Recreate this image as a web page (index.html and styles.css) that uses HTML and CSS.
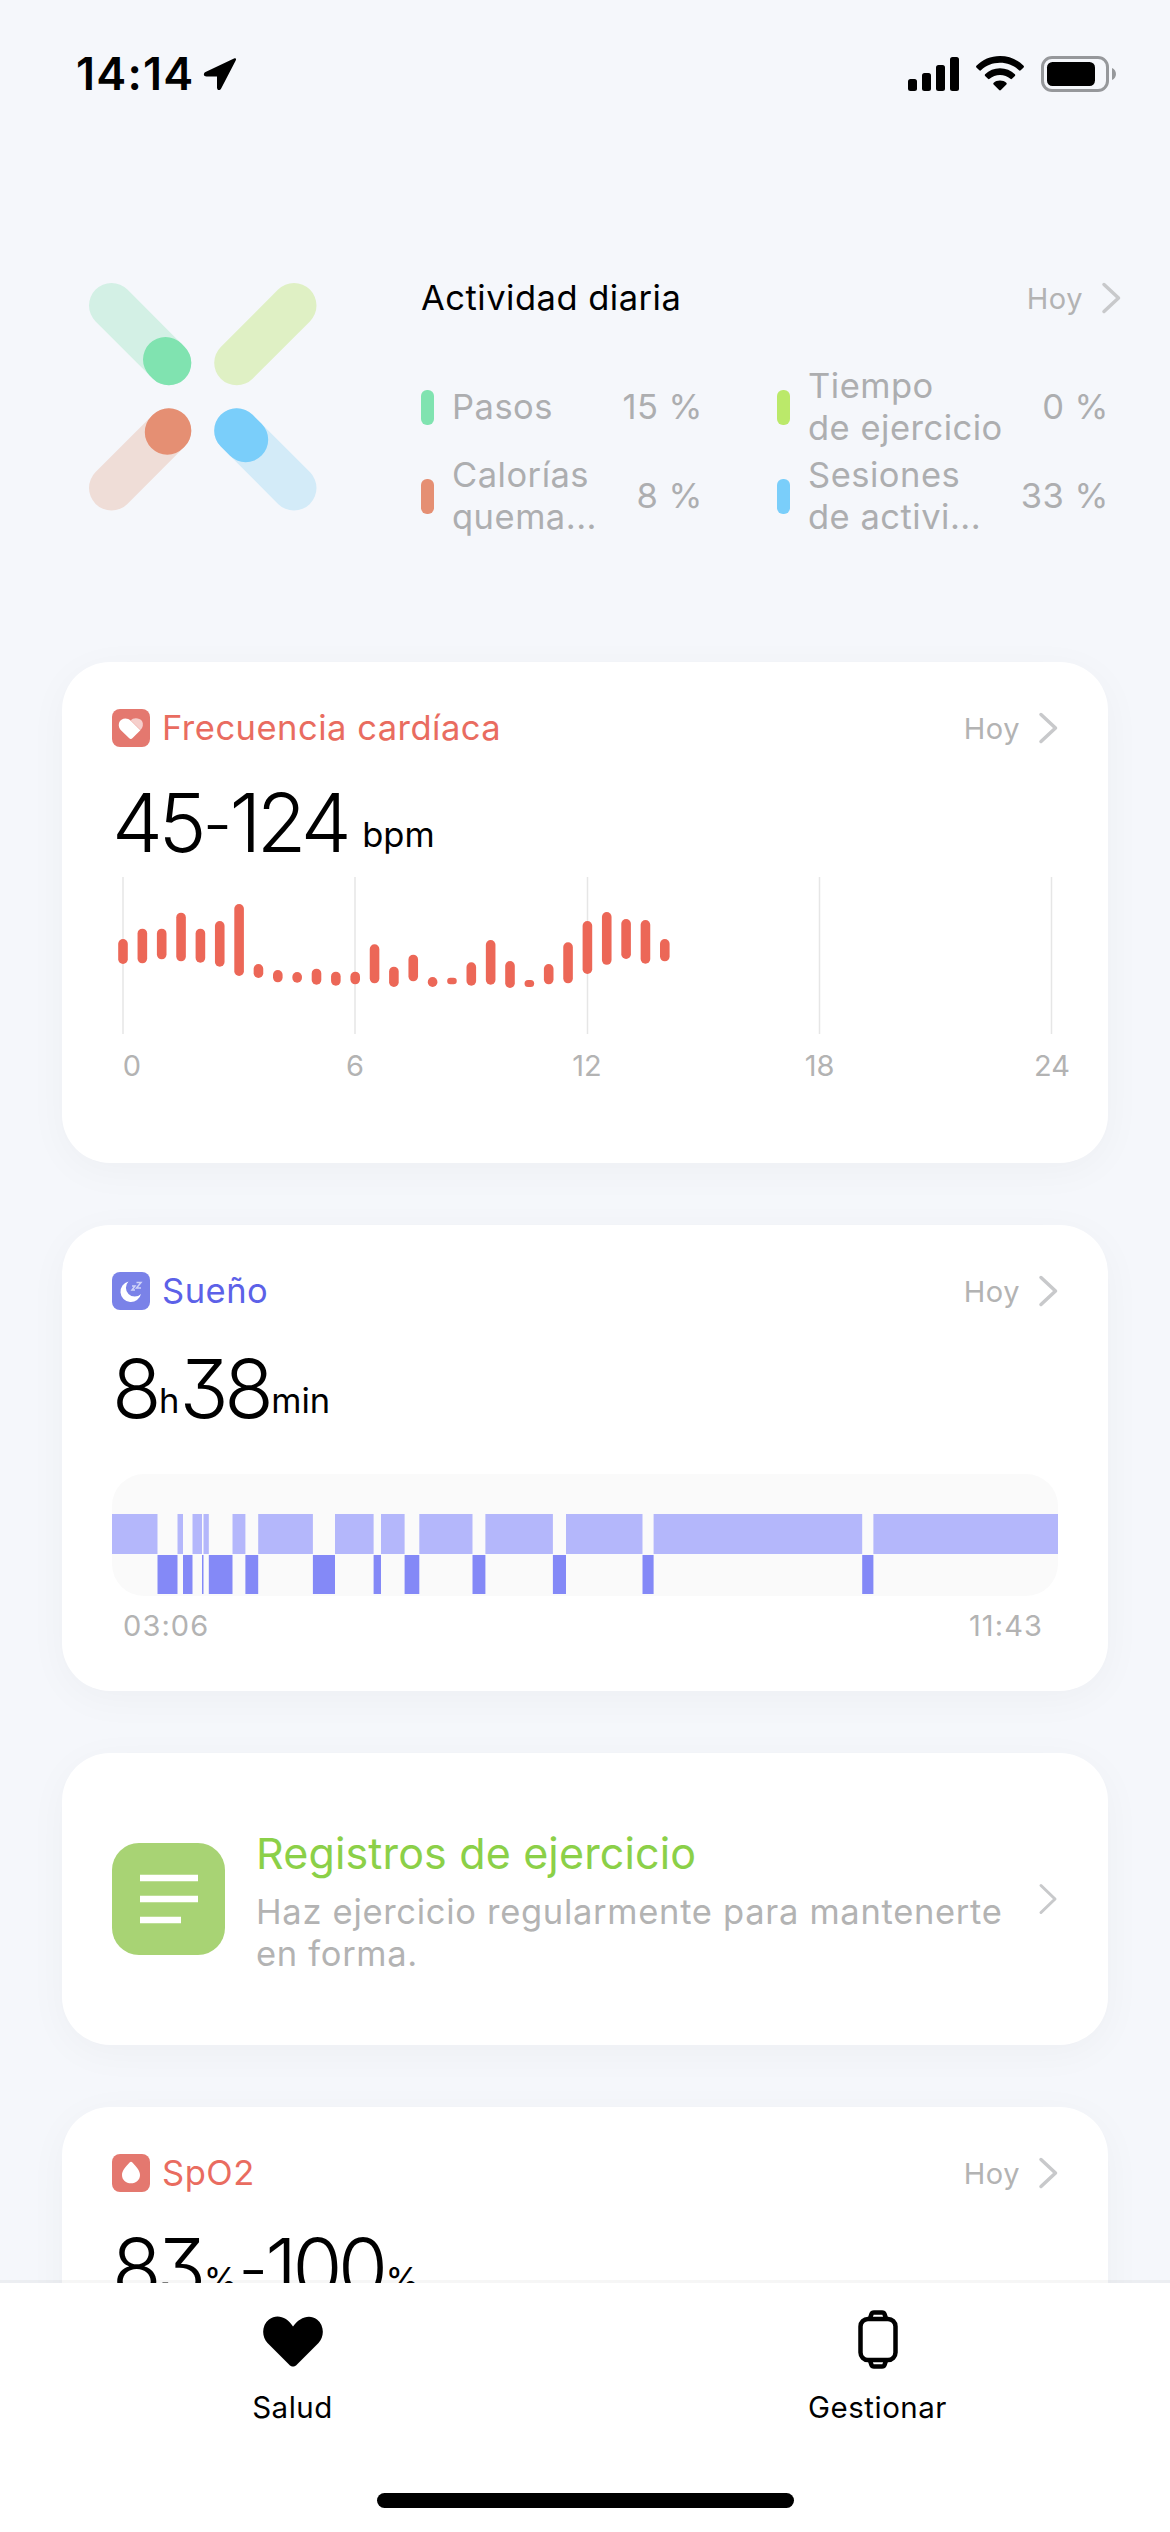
FILE: index.html
```html
<!DOCTYPE html>
<html lang="es">
<head>
    <meta charset="UTF-8">
    <meta name="viewport" content="width=device-width, initial-scale=1.0">
    <title>Salud</title>
    <link rel="stylesheet" href="styles.css">
</head>
<body>
    <div class="status-bar">
        <span class="time">14:14</span>
        <svg class="location" width="34" height="34" viewBox="0 0 34 34"><path d="M31 1.500 L2.500 15 C0 16.500 .5 19.500 3.500 19.500 H14 V30.500 C14 33.500 17 34 18.300 31.200 L32.700 3.500 C33.700 1.500 32.500 .8 31 1.500 Z"/></svg>
        <div class="status-icons">
            <svg width="52" height="34" viewBox="0 0 52 34">
                <rect x="1" y="22" width="9" height="12" rx="2.500"/>
                <rect x="15" y="16" width="9" height="18" rx="2.500"/>
                <rect x="29" y="8" width="9" height="26" rx="2.500"/>
                <rect x="43" y="0" width="9" height="34" rx="2.500"/>
            </svg>
            <svg width="48" height="36" viewBox="0 0 48 36">
                <path d="M24 0 C33.300 0 41.600 3.700 47.600 9.800 C48.100 10.300 48.100 10.900 47.600 11.400 L44.700 14.300 C44.200 14.800 43.500 14.800 43 14.300 C38 9.500 31.400 6.800 24 6.800 C16.600 6.800 10 9.500 5 14.300 C4.500 14.800 3.800 14.800 3.300 14.300 L.4 11.400 C-.1 10.900 -.1 10.300 .4 9.800 C6.400 3.700 14.700 0 24 0 Z"/>
                <path d="M24 12.300 C29.800 12.300 35 14.500 38.900 18.200 C39.400 18.700 39.400 19.400 38.900 19.900 L36 22.800 C35.500 23.300 34.900 23.300 34.400 22.800 C31.600 20.300 28 18.900 24 18.900 C20 18.900 16.400 20.300 13.600 22.800 C13.100 23.300 12.500 23.300 12 22.800 L9.100 19.900 C8.600 19.400 8.600 18.700 9.100 18.200 C13 14.500 18.200 12.300 24 12.300 Z"/>
                <path d="M24 24.500 C26.500 24.500 28.700 25.300 30.300 26.700 C30.900 27.200 30.900 27.900 30.400 28.400 L24.900 34 C24.300 34.600 23.700 34.600 23.100 34 L17.600 28.400 C17.100 27.900 17.100 27.200 17.700 26.700 C19.300 25.300 21.500 24.500 24 24.500 Z"/>
            </svg>
            <svg width="76" height="36" viewBox="0 0 76 36">
                <rect x="1.500" y="1.500" width="65" height="33" rx="9.500" fill="none" stroke="#96989b" stroke-width="3"/>
                <rect x="6" y="6" width="48" height="24" rx="5.500"/>
                <path d="M71 12 C76.300 14 76.300 22 71 24 Z" fill="#96989b"/>
            </svg>
        </div>
    </div>

    <main class="content">
        <section class="activity">
            <svg class="activity-figure" width="228" height="228" viewBox="0 0 228 228">
                <path stroke="#d3f0e5" d="M22.500 22.500 L79.800 79.800"/>
                <path stroke="#dff0c4" d="M205 22.500 L147.700 79.800"/>
                <path stroke="#efddd7" d="M22.500 205 L79.800 147.700"/>
                <path stroke="#d3ebf8" d="M205 205 L147.700 147.700"/>
                <path stroke="#80e3b0" d="M76.500 76.500 L79.800 79.800"/>
                <path stroke="#e58f73" d="M78.300 149.200 L79.800 147.700"/>
                <path stroke="#7acefa" d="M156.700 156.700 L147.700 147.700"/>
            </svg>
            <div class="activity-info">
                <div class="activity-head">
                    <h2>Actividad diaria</h2>
                    <span class="today">Hoy</span>
                    <svg class="chevron" width="20" height="32" viewBox="0 0 20 32"><path d="M3 2.500 L17.500 16 L3 29.500"/></svg>
                </div>
                <div class="activity-grid">
                    <div class="stat">
                        <i class="pill green"></i>
                        <span class="label">Pasos</span>
                        <span class="value">15 %</span>
                    </div>
                    <div class="stat">
                        <i class="pill lime"></i>
                        <span class="label">Tiempo<br>de ejercicio</span>
                        <span class="value">0 %</span>
                    </div>
                    <div class="stat">
                        <i class="pill orange"></i>
                        <span class="label">Calorías<br>quema...</span>
                        <span class="value">8 %</span>
                    </div>
                    <div class="stat">
                        <i class="pill blue"></i>
                        <span class="label">Sesiones<br>de activi...</span>
                        <span class="value">33 %</span>
                    </div>
                </div>
            </div>
        </section>

        <section class="card heart">
            <div class="card-head">
                <svg class="card-icon" width="38" height="38" viewBox="0 0 38 38">
                    <rect width="38" height="38" rx="8" fill="#e4786f"/>
                    <path d="M18.800 11.500 C21 8.300 27.500 8.700 30 12 C31.700 15 31 18.500 28.500 21 Z" fill="#f6cfcc"/>
                    <path d="M18.800 11.800 C15 8 8.500 9.300 7 14 C6.200 17 7.300 19.500 9.200 21.500 L17 29 C18.200 30.200 19.400 30.200 20.600 29 L28.400 21.200 Z" fill="#fff"/>
                </svg>
                <h2>Frecuencia cardíaca</h2>
                <span class="today">Hoy</span>
                <svg class="chevron" width="20" height="32" viewBox="0 0 20 32"><path d="M3 2.500 L17.500 16 L3 29.500"/></svg>
            </div>
            <div class="big">45<span class="dash">-</span>124<small class="bpm">bpm</small></div>
            <svg class="heart-chart" width="946" height="206" viewBox="112 877 946 206">
                <path class="grid" d="M123 877 V1034 M355 877 V1034 M587.500 877 V1034 M819.500 877 V1034 M1051.500 877 V1034"/>
                <g class="bars" id="bars"></g>
                <g class="axis">
                    <text x="132" y="1076">0</text>
                    <text x="355" y="1076">6</text>
                    <text x="587" y="1076">12</text>
                    <text x="819.500" y="1076">18</text>
                    <text x="1052" y="1076">24</text>
                </g>
            </svg>
        </section>

        <section class="card sleep">
            <div class="card-head">
                <svg class="card-icon" width="38" height="38" viewBox="0 0 38 38">
                    <rect width="38" height="38" rx="8" fill="#7a82e8"/>
                    <path d="M16.500 9.500 A10.400 10.400 0 1 0 29 22 A7.800 7.800 0 0 1 16.500 9.500 Z" fill="#fff"/>
                    <path d="M20 14 H23 L20 18 H23 M24.500 10.500 H29 L24.500 16 H29" fill="none" stroke="#d0d3f8" stroke-width="1.500"/>
                </svg>
                <h2>Sueño</h2>
                <span class="today">Hoy</span>
                <svg class="chevron" width="20" height="32" viewBox="0 0 20 32"><path d="M3 2.500 L17.500 16 L3 29.500"/></svg>
            </div>
            <div class="big">8<small>h</small>38<small>min</small></div>
            <svg class="sleep-chart" width="946" height="122" viewBox="112 0 946 122" id="sleep">
                <rect x="112" y="0" width="946" height="122" rx="32" fill="#fafafa"/>
            </svg>
            <div class="sleep-times">
                <span>03:06</span>
                <span>11:43</span>
            </div>
        </section>

        <section class="card records">
            <svg class="records-icon" width="113" height="112" viewBox="0 0 113 112">
                <rect width="113" height="112" rx="27" fill="#a8d374"/>
                <path d="M28 35 H86 M28 56 H86 M28 77 H69" stroke="#fff" stroke-width="6.500"/>
            </svg>
            <div class="records-text">
                <h2>Registros de ejercicio</h2>
                <p>Haz ejercicio regularmente para mantenerte<br>en forma.</p>
            </div>
            <svg class="chevron" width="20" height="32" viewBox="0 0 20 32"><path d="M3 2.500 L17 16 L3 29.500"/></svg>
        </section>

        <section class="card spo2">
            <div class="card-head">
                <svg class="card-icon" width="38" height="38" viewBox="0 0 38 38">
                    <rect width="38" height="38" rx="8" fill="#e4786f"/>
                    <path d="M17.600 8.500 C18.500 7.500 19.500 7.500 20.400 8.500 C24 12.300 28 16.500 28 21 C28 26 24 29.300 19 29.300 C14 29.300 10 26 10 21 C10 16.500 14 12.300 17.600 8.500 Z" fill="#fff"/>
                </svg>
                <h2>SpO2</h2>
                <span class="today">Hoy</span>
                <svg class="chevron" width="20" height="32" viewBox="0 0 20 32"><path d="M3 2.500 L17.500 16 L3 29.500"/></svg>
            </div>
            <div class="big">83<small>%</small><span class="dash">-</span>100<small>%</small></div>
        </section>
    </main>

    <nav class="tab-bar">
        <div class="tabs">
            <a class="tab">
                <svg width="60" height="60" viewBox="0 0 60 60"><path d="M30 16.500 C24 7 14 3.500 6 9.500 C-1.500 15.500 -1.500 26.500 4.500 33 L26 54.500 C28.500 57.300 31.500 57.300 34 54.500 L55.500 33 C61.500 26.500 61.500 15.500 54 9.500 C46 3.500 36 8 30 16.500 Z"/></svg>
                <span>Salud</span>
            </a>
            <a class="tab">
                <svg width="60" height="60" viewBox="0 0 60 60" fill="none" stroke="#000" stroke-width="4.500">
                    <rect x="12.500" y="9" width="35" height="41" rx="7.500"/>
                    <path d="M22 8.500 L23.500 4 Q24 2.500 26 2.500 H34 Q36 2.500 36.500 4 L38 8.500 M22 50.500 L23.500 55 Q24 56.500 26 56.500 H34 Q36 56.500 36.500 55 L38 50.500"/>
                </svg>
                <span>Gestionar</span>
            </a>
        </div>
        <div class="home-indicator"></div>
    </nav>

    <script src="charts.js"></script>
</body>
</html>
```

FILE: styles.css
```css
* {
    box-sizing: border-box;
}
body {
    margin: 0;
    width: 1170px;
    height: 2532px;
    display: flex;
    flex-direction: column;
    overflow: hidden;
    background-color: #f5f7fb;
    color: #000;
    font-family: Inter, "Liberation Sans", sans-serif;
}
h2, p {
    margin: 0;
    font-weight: 400;
}
svg {
    display: block;
    flex: none;
}

/* Barra de estado */
.status-bar {
    height: 148px;
    padding: 0 53px 0 76px;
    display: flex;
    align-items: center;
}
.time {
    font-size: 45px;
    font-weight: 600;
    line-height: 50px;
    letter-spacing: 1.2px;
}
.location {
    margin-left: 9px;
}
.status-icons {
    margin-left: auto;
    display: flex;
    align-items: center;
    gap: 17px;
}

.content {
    flex: 1;
    min-height: 0;
    overflow: hidden;
}

/* Actividad diaria */
.activity {
    height: 514px;
    padding: 135px 49px 0 89px;
    display: flex;
}
.activity-figure {
    fill: none;
    stroke-width: 45;
    stroke-linecap: round;
}
.activity-info {
    flex: 1;
    margin-left: 104px;
}
.activity-head,
.card-head {
    height: 38px;
    display: flex;
    align-items: center;
}
.activity-head {
    margin-top: -4px;
}
.activity-head h2,
.card-head h2 {
    flex: 1;
    font-size: 34.5px;
    line-height: 38px;
    letter-spacing: 0.5px;
}
.today {
    font-size: 29px;
    letter-spacing: 0.5px;
    color: #b3b3b3;
}
.chevron {
    margin-left: 18px;
    fill: none;
    stroke: #c8c9cb;
    stroke-width: 3.5;
    stroke-linecap: round;
    stroke-linejoin: round;
}
.activity-grid {
    margin-top: 48px;
    display: grid;
    grid-template-columns: 282px 332px;
    column-gap: 74px;
    row-gap: 5px;
}
.stat {
    height: 84px;
    display: flex;
    align-items: center;
    font-size: 34.5px;
    line-height: 42px;
    letter-spacing: 0.5px;
    color: #adaeb0;
}
.label {
    flex: 1;
    margin-left: 18px;
    white-space: nowrap;
}
.pill {
    width: 13px;
    height: 35px;
    border-radius: 6px;
}
.green { background-color: #80e3b0; }
.lime { background-color: #bbe96a; }
.orange { background-color: #e58f73; }
.blue { background-color: #7acefa; }

/* Tarjetas */
.card {
    margin: 0 62px 62px;
    padding: 47px 50px 0;
    border-radius: 48px;
    background-color: #fff;
    box-shadow: 0 8px 40px rgba(0, 0, 0, 0.035);
}
.card-head h2 {
    margin-left: 12px;
}
.heart { height: 501px; }
.sleep { height: 466px; }
.spo2 { height: 466px; }
.heart h2, .spo2 h2 { color: #e96c60; }
.sleep h2 { color: #5c61e8; }

.big {
    margin-top: 36px;
    height: 80px;
    font-size: 81px;
    line-height: 80px;
    font-weight: 300;
    letter-spacing: -4.5px;
    white-space: nowrap;
    font-feature-settings: "cv09";
}
.big small {
    margin-left: 2px;
    font-size: 34.5px;
    line-height: 1;
    font-weight: 400;
    letter-spacing: 0;
    vertical-align: 5px;
}
.big .bpm {
    margin-left: 15px;
}
.dash {
    margin: 0 2px 0 1px;
    font-size: 64px;
    line-height: 1;
    vertical-align: 5px;
}
.sleep .big {
    margin-top: 39px;
}

.heart-chart {
    margin-top: 14px;
    overflow: visible;
}
.grid {
    stroke: #e6e6e6;
    stroke-width: 1.5;
}
.bars {
    fill: #ec6757;
}
.axis {
    font-size: 29px;
    fill: #b3b3b3;
    text-anchor: middle;
}

.sleep-chart {
    margin-top: 45px;
}
.light { fill: #b4b7fb; }
.deep { fill: #8489f7; }
.sleep-times {
    margin-top: 15px;
    padding: 0 15px 0 11px;
    display: flex;
    justify-content: space-between;
    font-size: 29px;
    line-height: 30px;
    letter-spacing: 1.1px;
    color: #b3b3b3;
}

.records {
    height: 292px;
    padding: 0 50px;
    display: flex;
    align-items: center;
}
.records-text {
    flex: 1;
    margin: 2px 0 0 31px;
    white-space: nowrap;
}
.records h2 {
    font-size: 43px;
    line-height: 54px;
    letter-spacing: 0.15px;
    color: #8bd048;
}
.records p {
    margin-top: 11px;
    font-size: 34.5px;
    line-height: 42px;
    letter-spacing: 0.7px;
    color: #b3b3b3;
}
.records .chevron {
    margin-left: 0;
    stroke-width: 3;
}

/* Barra inferior */
.tab-bar {
    height: 249px;
    background-color: #fff;
    box-shadow: 0 -3px 0 rgba(0, 0, 0, 0.035);
    z-index: 1;
}
.tabs {
    display: flex;
    padding-top: 27px;
    height: 210px;
}
.tab {
    flex: 1;
    display: flex;
    flex-direction: column;
    align-items: center;
    gap: 19px;
    font-size: 29.5px;
    line-height: 36px;
    letter-spacing: 0.5px;
}
.home-indicator {
    width: 417px;
    height: 15px;
    margin: 0 auto;
    border-radius: 8px;
    background-color: #000;
}
```

FILE: charts.js
```js
const SVG = "http://www.w3.org/2000/svg";

function addRect(parent, attrs) {
    const rect = document.createElementNS(SVG, "rect");
    Object.keys(attrs).forEach(k => rect.setAttribute(k, attrs[k]));
    parent.appendChild(rect);
}

// Frecuencia cardíaca: [arriba, abajo] cada media hora
const heart = [
    [939, 964], [928.7, 963.3], [928.7, 959.3], [912.7, 961.3], [928.7, 962.7],
    [921, 966.7], [904, 976], [964, 978], [970, 982.3], [972, 982.7],
    [968.7, 984.7], [971.7, 985.7], [971.7, 984.3], [944.3, 983.3], [966.7, 987],
    [954.7, 981.3], [977, 987], [977.7, 984.3], [962.3, 985.7], [940, 984.7],
    [961, 988], [980, 987], [964, 984.3], [942.3, 983.3], [921, 974],
    [912, 964.8], [919, 959], [920, 963.7], [939, 961.3]
];
const bars = document.getElementById("bars");
heart.forEach(([top, bottom], i) => {
    const h = bottom - top;
    addRect(bars, { x: 118.2 + i * 19.35, y: top, width: 9.6, height: h, rx: Math.min(4.8, h / 2) });
});

// Fases de sueño: ligero y profundo alternados
const phases = [
    112, 157.5, 177.5, 183, 192.5, 202, 203.5, 208.8, 232.5, 245.4, 258.2, 312.9,
    335, 373.6, 381, 404.6, 419.3, 472.5, 485.4, 552.9, 566, 642.5, 653.6, 862.2, 873.4, 1058
];
const sleep = document.getElementById("sleep");
for (let i = 0; i < phases.length - 1; i++) {
    const light = i % 2 === 0;
    addRect(sleep, {
        class: light ? "light" : "deep",
        x: phases[i],
        y: light ? 40 : 81,
        width: phases[i + 1] - phases[i],
        height: light ? 40 : 39
    });
}
```
